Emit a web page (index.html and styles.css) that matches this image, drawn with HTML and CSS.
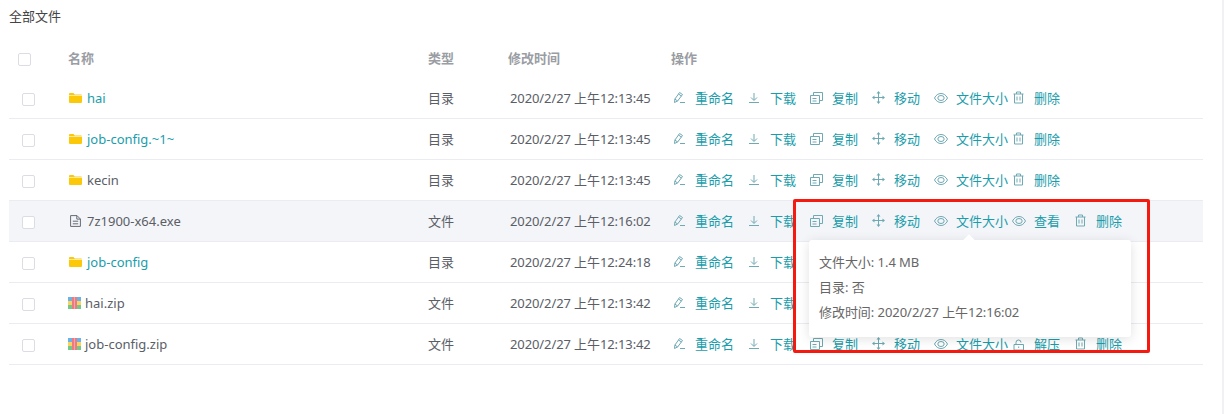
FILE: index.html
```html
<!DOCTYPE html>
<html lang="zh-CN">
<head>
  <meta charset="UTF-8">
  <title>全部文件</title>
  <link rel="stylesheet" href="styles.css">
</head>
<body>
  <svg class="sprites" width="0" height="0">
    <symbol id="i-edit" viewBox="0 0 14 14"><path d="M1.500 11.500 1.900 8 6.600 1.500 9.500 3.500 4.600 10zM1.900 8 4.600 10M5.500 3 8.400 5M7 11.500h5" fill="none" stroke="currentColor"/></symbol>
    <symbol id="i-down" viewBox="0 0 14 14"><path d="M6 2v7M3 6.500 6 9.500 9 6.500M1 11.500h10" fill="none" stroke="currentColor"/></symbol>
    <symbol id="i-copy" viewBox="0 0 14 14"><path d="M.5 4.500h9v8h-9zM3.500 4.500v-3h9v8h-3M2.500 7.500h4M2.500 10h4" fill="none" stroke="currentColor"/></symbol>
    <symbol id="i-move" viewBox="0 0 14 14"><path d="M6.500 1v11M1 6.500h11" fill="none" stroke="currentColor"/><path d="M6.500 0 8.500 2.500h-4zM6.500 13 8.500 10.500h-4zM0 6.500 2.500 4.500v4zM13 6.500 10.500 4.500v4z" fill="currentColor"/></symbol>
    <symbol id="i-eye" viewBox="0 0 14 14"><path d="M.5 7C2 4 4.300 2.500 7 2.500S12 4 13.500 7C12 10 9.700 11.500 7 11.500S2 10 .5 7z" fill="none" stroke="currentColor"/><ellipse cx="7" cy="7" rx="3.200" ry="2.500" fill="none" stroke="currentColor"/></symbol>
    <symbol id="i-trash" viewBox="0 0 14 14"><path d="M1.500 3h10M4.500 3V1h4v2M2.500 3v9h8V3M5 5.500v4M8 5.500v4" fill="none" stroke="currentColor"/></symbol>
    <symbol id="i-lock" viewBox="0 0 14 14"><path d="M2 7.500h9.500v5.500H2zM4 7.500V5.500a2.500 2.500 0 0 1 5 0M6.700 9.500v1.500" fill="none" stroke="currentColor"/></symbol>
    <symbol id="i-folder" viewBox="0 0 13 10"><path d="M0 1a1 1 0 0 1 1-1h3.500l1.200 1.500H12a1 1 0 0 1 1 1V9a1 1 0 0 1-1 1H1a1 1 0 0 1-1-1z" fill="#fcc80a"/><path d="M0 2.500h13" stroke="#fff" stroke-width=".6"/></symbol>
    <symbol id="i-file" viewBox="0 0 11 12"><path d="M.6.600h6.400L10.400 4v7.400H.6zM6.800.600v3.500h3.600M2.800 6.200h5.400M2.800 8.800h5.400" fill="none" stroke="#666a75"/></symbol>
    <symbol id="i-zip" viewBox="0 0 13 12"><rect width="4" height="4" fill="#6bb2e8"/><rect y="4" width="4" height="4" fill="#f9d262"/><rect y="8" width="4" height="4" fill="#74c98a"/><rect x="4" width="5" height="12" fill="#ec7a80"/><rect x="6" width="1" height="12" fill="#f3a5a9"/><rect x="9" width="4" height="4" fill="#6bb2e8"/><rect x="9" y="4" width="4" height="4" fill="#f9d262"/><rect x="9" y="8" width="4" height="4" fill="#74c98a"/></symbol>
  </svg>

  <div class="crumb">全部文件</div>

  <div class="file-table">
    <div class="row head">
      <span class="check"></span>
      <span class="col-name">名称</span>
      <span class="col-type">类型</span>
      <span class="col-time">修改时间</span>
      <span class="col-ops">操作</span>
    </div>

    <div class="row">
      <span class="check"></span>
      <span class="col-name"><svg class="file-icon folder"><use href="#i-folder"/></svg><a class="link">hai</a></span>
      <span class="col-type">目录</span>
      <span class="col-time">2020/2/27 上午12:13:45</span>
      <span class="col-ops">
        <a class="op"><svg><use href="#i-edit"/></svg>重命名</a>
        <a class="op"><svg><use href="#i-down"/></svg>下载</a>
        <a class="op"><svg><use href="#i-copy"/></svg>复制</a>
        <a class="op"><svg><use href="#i-move"/></svg>移动</a>
        <a class="op op-size"><svg><use href="#i-eye"/></svg>文件大小</a>
        <a class="op"><svg><use href="#i-trash"/></svg>删除</a>
      </span>
    </div>

    <div class="row">
      <span class="check"></span>
      <span class="col-name"><svg class="file-icon folder"><use href="#i-folder"/></svg><a class="link">job-config.~1~</a></span>
      <span class="col-type">目录</span>
      <span class="col-time">2020/2/27 上午12:13:45</span>
      <span class="col-ops">
        <a class="op"><svg><use href="#i-edit"/></svg>重命名</a>
        <a class="op"><svg><use href="#i-down"/></svg>下载</a>
        <a class="op"><svg><use href="#i-copy"/></svg>复制</a>
        <a class="op"><svg><use href="#i-move"/></svg>移动</a>
        <a class="op op-size"><svg><use href="#i-eye"/></svg>文件大小</a>
        <a class="op"><svg><use href="#i-trash"/></svg>删除</a>
      </span>
    </div>

    <div class="row">
      <span class="check"></span>
      <span class="col-name"><svg class="file-icon folder"><use href="#i-folder"/></svg>kecin</span>
      <span class="col-type">目录</span>
      <span class="col-time">2020/2/27 上午12:13:45</span>
      <span class="col-ops">
        <a class="op"><svg><use href="#i-edit"/></svg>重命名</a>
        <a class="op"><svg><use href="#i-down"/></svg>下载</a>
        <a class="op"><svg><use href="#i-copy"/></svg>复制</a>
        <a class="op"><svg><use href="#i-move"/></svg>移动</a>
        <a class="op op-size"><svg><use href="#i-eye"/></svg>文件大小</a>
        <a class="op"><svg><use href="#i-trash"/></svg>删除</a>
      </span>
    </div>

    <div class="row hovered">
      <span class="check"></span>
      <span class="col-name"><svg class="file-icon file"><use href="#i-file"/></svg>7z1900-x64.exe</span>
      <span class="col-type">文件</span>
      <span class="col-time">2020/2/27 上午12:16:02</span>
      <span class="col-ops">
        <a class="op"><svg><use href="#i-edit"/></svg>重命名</a>
        <a class="op"><svg><use href="#i-down"/></svg>下载</a>
        <a class="op"><svg><use href="#i-copy"/></svg>复制</a>
        <a class="op"><svg><use href="#i-move"/></svg>移动</a>
        <a class="op op-size"><svg><use href="#i-eye"/></svg>文件大小</a>
        <a class="op"><svg><use href="#i-eye"/></svg>查看</a>
        <a class="op"><svg><use href="#i-trash"/></svg>删除</a>
      </span>
    </div>

    <div class="row">
      <span class="check"></span>
      <span class="col-name"><svg class="file-icon folder"><use href="#i-folder"/></svg><a class="link">job-config</a></span>
      <span class="col-type">目录</span>
      <span class="col-time">2020/2/27 上午12:24:18</span>
      <span class="col-ops">
        <a class="op"><svg><use href="#i-edit"/></svg>重命名</a>
        <a class="op"><svg><use href="#i-down"/></svg>下载</a>
      </span>
    </div>

    <div class="row">
      <span class="check"></span>
      <span class="col-name"><svg class="file-icon zip"><use href="#i-zip"/></svg>hai.zip</span>
      <span class="col-type">文件</span>
      <span class="col-time">2020/2/27 上午12:13:42</span>
      <span class="col-ops">
        <a class="op"><svg><use href="#i-edit"/></svg>重命名</a>
        <a class="op"><svg><use href="#i-down"/></svg>下载</a>
      </span>
    </div>

    <div class="row">
      <span class="check"></span>
      <span class="col-name"><svg class="file-icon zip"><use href="#i-zip"/></svg>job-config.zip</span>
      <span class="col-type">文件</span>
      <span class="col-time">2020/2/27 上午12:13:42</span>
      <span class="col-ops">
        <a class="op"><svg><use href="#i-edit"/></svg>重命名</a>
        <a class="op"><svg><use href="#i-down"/></svg>下载</a>
        <a class="op"><svg><use href="#i-copy"/></svg>复制</a>
        <a class="op"><svg><use href="#i-move"/></svg>移动</a>
        <a class="op op-size"><svg><use href="#i-eye"/></svg>文件大小</a>
        <a class="op"><svg><use href="#i-lock"/></svg>解压</a>
        <a class="op"><svg><use href="#i-trash"/></svg>删除</a>
      </span>
    </div>

    <div class="popover">
      <p>文件大小: 1.4 MB</p>
      <p>目录: 否</p>
      <p>修改时间: 2020/2/27 上午12:16:02</p>
    </div>
  </div>

  <div class="red-box"></div>
  <div class="scroll-track"></div>
</body>
</html>
```

FILE: styles.css
```css
* {
  box-sizing: border-box;
  margin: 0;
  padding: 0;
}
body {
  font-family: "Noto Sans", "Noto Sans CJK SC", sans-serif;
  font-size: 13px;
  color: #5a5e66;
  background-color: #fff;
  padding: 7px 21px 0 9px;
  overflow: hidden;
}
.sprites {
  position: absolute;
}
.crumb {
  height: 31px;
  line-height: 18px;
  color: #444;
}
.file-table {
  position: relative;
}
.row {
  display: flex;
  align-items: center;
  height: 41px;
  border-bottom: 1px solid #ebecf2;
}
.row.head {
  height: 40px;
  border-bottom: none;
  color: #9a9da3;
  font-weight: 700;
}
.row.hovered {
  background-color: #f4f5f9;
}
.check {
  width: 13px;
  height: 13px;
  margin-top: 2px;
  margin-left: 13px;
  margin-right: 33px;
  background-color: #fff;
  border: 1px solid #dcdde4;
  border-radius: 2px;
  flex-shrink: 0;
}
.head .check {
  margin-left: 9px;
  margin-right: 37px;
}
.col-name {
  width: 360px;
  display: flex;
  align-items: center;
}
.col-type {
  width: 80px;
  padding-bottom: 2px;
}
.col-time {
  width: 163px;
  padding-left: 2px;
  padding-bottom: 2px;
  letter-spacing: -0.1px;
}
.head .col-time {
  padding-left: 0;
  letter-spacing: 0;
}
.head .col-name {
  padding-bottom: 2px;
}
.col-ops {
  display: flex;
  align-items: center;
  padding-left: 2px;
  padding-bottom: 2px;
  white-space: nowrap;
}
.head .col-ops {
  padding-left: 0;
}
.file-icon {
  flex-shrink: 0;
}
.file-icon.folder {
  width: 13px;
  height: 10px;
  margin-left: 1px;
  margin-right: 5px;
}
.file-icon.file {
  width: 11px;
  height: 12px;
  margin-left: 2px;
  margin-right: 6px;
}
.file-icon.zip {
  width: 13px;
  height: 12px;
  margin-right: 4px;
}
.link {
  color: #1a9dab;
}
.op {
  display: flex;
  align-items: center;
  color: #1a9dab;
  margin-right: 14px;
}
.op svg {
  width: 14px;
  height: 14px;
  margin-top: 2px;
  margin-right: 8px;
  color: #6fa9b3;
}
.op-size {
  margin-right: 4px;
}
.popover {
  position: absolute;
  left: 800px;
  top: 202px;
  width: 322px;
  height: 97px;
  padding: 10px 10px 0;
  background-color: #fff;
  border-radius: 3px;
  box-shadow: 0 2px 12px rgba(0, 0, 0, 0.12);
  color: #666;
  letter-spacing: -0.05px;
}
.popover p {
  line-height: 25px;
}
.popover::before {
  content: "";
  position: absolute;
  left: 156px;
  top: -4px;
  width: 8px;
  height: 8px;
  background-color: #fff;
  transform: rotate(45deg);
}
.red-box {
  position: absolute;
  left: 793px;
  top: 199px;
  width: 357px;
  height: 154px;
  border: 3px solid #f5190f;
  border-radius: 2px;
}
.scroll-track {
  position: fixed;
  top: 0;
  right: 0;
  bottom: 0;
  width: 2px;
  background-color: #f1f1f3;
}
```
